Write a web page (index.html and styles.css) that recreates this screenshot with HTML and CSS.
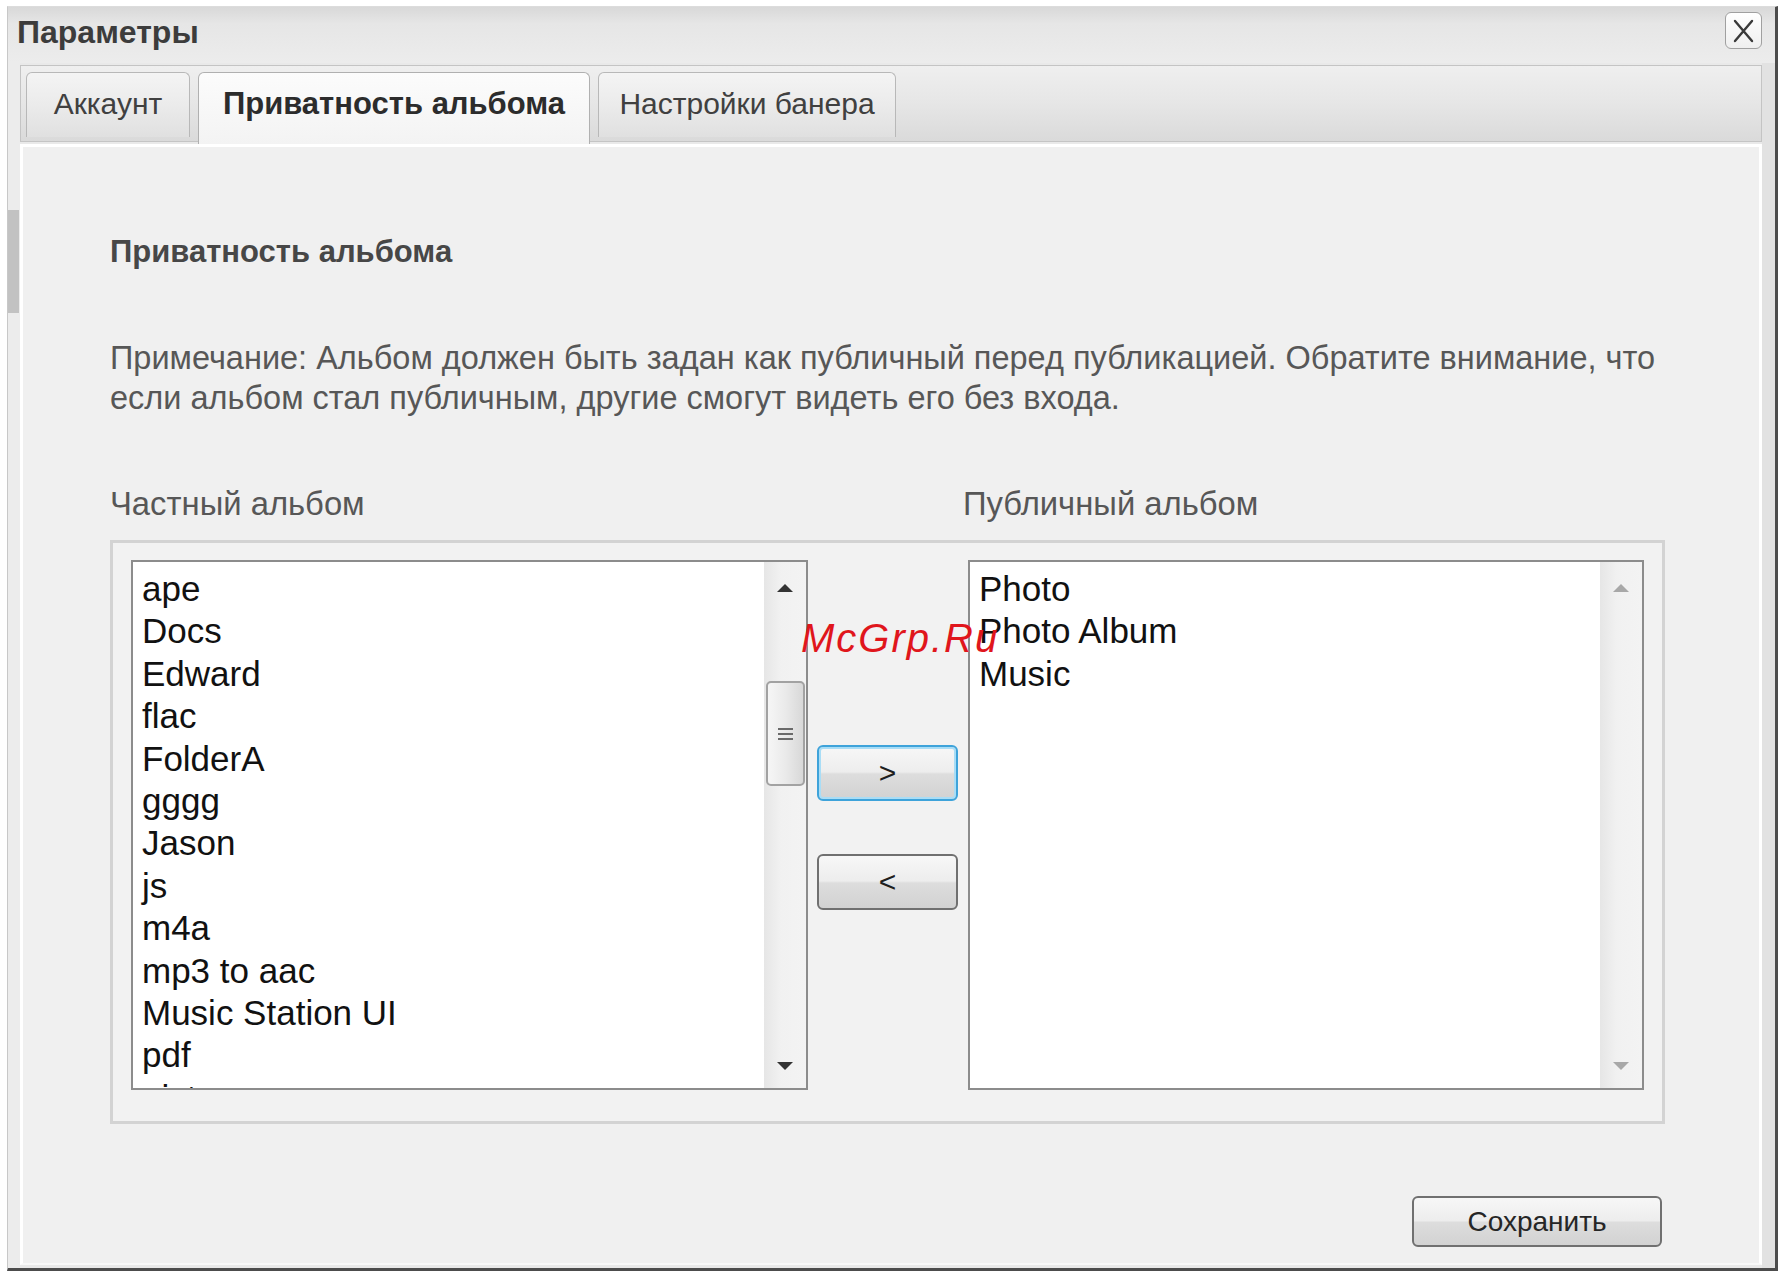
FILE: index.html
```html
<!DOCTYPE html>
<html lang="ru">
<head>
<meta charset="utf-8">
<title>Параметры</title>
<link rel="stylesheet" href="styles.css">
</head>
<body>
<div class="dialog">
  <div class="titlebar">
    <span class="title">Параметры</span>
    <div class="close">
      <svg width="35" height="36" viewBox="0 0 35 36"><path d="M9 8 L26 28 M26 8 L9 28" stroke="#3a3a3a" stroke-width="2.4" fill="none" stroke-linecap="round"/></svg>
    </div>
  </div>
  <div class="dlg-body">
    <div class="gutter"><div class="pagethumb"></div></div>
    <div class="main">
      <div class="tabstrip">
        <div class="tab t1">Аккаунт</div>
        <div class="tab t2 active">Приватность альбома</div>
        <div class="tab t3">Настройки банера</div>
      </div>
      <div class="panel">
        <h2 class="heading">Приватность альбома</h2>
        <p class="note">Примечание: Альбом должен быть задан как публичный перед публикацией. Обратите внимание, что<br>если альбом стал публичным, другие смогут видеть его без входа.</p>
        <div class="labels">
          <span class="lbl-left">Частный альбом</span>
          <span class="lbl-right">Публичный альбом</span>
        </div>
        <div class="group">
          <div class="listbox left">
            <div class="items">
              <div class="item">ape</div>
              <div class="item">Docs</div>
              <div class="item">Edward</div>
              <div class="item">flac</div>
              <div class="item">FolderA</div>
              <div class="item">gggg</div>
              <div class="item">Jason</div>
              <div class="item">js</div>
              <div class="item">m4a</div>
              <div class="item">mp3 to aac</div>
              <div class="item">Music Station UI</div>
              <div class="item">pdf</div>
              <div class="item">pict</div>
            </div>
            <div class="scrollbar">
              <div class="arrow up"></div>
              <div class="thumb"><span></span><span></span><span></span></div>
              <div class="spacer"></div>
              <div class="arrow down"></div>
            </div>
          </div>
          <div class="movers">
            <div class="btn mover focused">&gt;</div>
            <div class="btn mover">&lt;</div>
          </div>
          <div class="listbox right">
            <div class="items">
              <div class="item">Photo</div>
              <div class="item">Photo Album</div>
              <div class="item">Music</div>
            </div>
            <div class="scrollbar disabled">
              <div class="arrow up"></div>
              <div class="spacer"></div>
              <div class="arrow down"></div>
            </div>
          </div>
          <div class="watermark">McGrp.Ru</div>
        </div>
        <div class="actions">
          <div class="btn save">Сохранить</div>
        </div>
      </div>
    </div>
    <div class="rgutter"></div>
  </div>
</div>
</body>
</html>
```

FILE: styles.css
```css
html, body {
  margin: 0;
  padding: 0;
  background: #ffffff;
}
body {
  font-family: "Liberation Sans", Arial, sans-serif;
  width: 1786px;
  height: 1279px;
  overflow: hidden;
}
.dialog {
  box-sizing: border-box;
  margin: 6px 0 0 7px;
  width: 1771px;
  height: 1265px;
  border-left: 1px solid #c8c8c8;
  border-top: 1px solid #dcdcdc;
  border-right: 3px solid #4c4c4c;
  border-bottom: 3px solid #4c4c4c;
  background: #e9e9e9;
  display: flex;
  flex-direction: column;
}
.titlebar {
  height: 56px;
  flex: none;
  display: flex;
  align-items: flex-start;
  justify-content: space-between;
  padding-left: 9px;
  padding-right: 13px;
  background: linear-gradient(#d8d8d8 0%, #e6e6e6 30%, #ececec 100%);
}
.title {
  font-weight: bold;
  font-size: 32px;
  line-height: 36px;
  margin-top: 7px;
  color: #3c3c3c;
}
.close {
  margin-top: 5px;
  width: 37px;
  height: 37px;
  box-sizing: border-box;
  border: 1px solid #a0a0a0;
  border-radius: 6px;
  background: linear-gradient(#ffffff, #efefef);
  display: flex;
  align-items: center;
  justify-content: center;
}
.close svg {
  display: block;
}
.dlg-body {
  flex: 1;
  display: flex;
  min-height: 0;
}
.gutter {
  width: 12px;
  flex: none;
  background: #ececec;
}
.pagethumb {
  margin-top: 147px;
  width: 11px;
  height: 103px;
  background: #c2c2c2;
}
.main {
  width: 1742px;
  flex: none;
  display: flex;
  flex-direction: column;
  padding-top: 2px;
  padding-bottom: 3px;
  box-sizing: border-box;
}
.rgutter {
  width: 13px;
  flex: none;
  background: #e2e2e2;
}
.tabstrip {
  box-sizing: border-box;
  height: 77px;
  flex: none;
  border: 1px solid #c4c4c4;
  background: linear-gradient(#efefef 0%, #e6e6e6 50%, #dadada 100%);
  display: flex;
  align-items: flex-start;
  gap: 8px;
  padding: 6px 0 0 5px;
  position: relative;
  z-index: 1;
}
.tab {
  box-sizing: border-box;
  height: 65px;
  border: 1px solid #b8b8b8;
  border-bottom: none;
  border-radius: 6px 6px 0 0;
  background: linear-gradient(#f4f4f4 0%, #ebebeb 50%, #e0e0e0 100%);
  font-size: 30px;
  line-height: 62px;
  text-align: center;
  color: #404040;
  white-space: nowrap;
}
.t1 { width: 164px; }
.t2 { width: 392px; }
.t3 { width: 298px; }
.tab.active {
  height: 72px;
  background: linear-gradient(#fcfcfc 0%, #f3f3f3 100%);
  font-weight: bold;
  font-size: 31px;
  color: #2c2c2c;
  border-color: #b0b0b0;
}
.panel {
  flex: 1;
  margin-top: 2px;
  border: 3px solid #ffffff;
  border-bottom: 2px solid #f8f8f8;
  background: #f0f0f0;
  padding-left: 87px;
  box-sizing: border-box;
}
.heading {
  margin: 0;
  padding-top: 85px;
  font-size: 31px;
  line-height: 40px;
  font-weight: bold;
  color: #474747;
}
.note {
  margin: 66px 0 0 0;
  font-size: 32.5px;
  line-height: 40px;
  color: #575757;
  white-space: nowrap;
}
.labels {
  margin-top: 66px;
  display: flex;
  font-size: 32.8px;
  line-height: 40px;
  color: #575757;
}
.lbl-left {
  width: 853px;
}
.group {
  position: relative;
  margin-top: 16px;
  box-sizing: border-box;
  width: 1555px;
  height: 584px;
  border: 3px solid #d3d3d3;
  background: #f2f2f2;
  display: flex;
  align-items: flex-start;
  padding: 17px 18px 0 18px;
}
.listbox {
  box-sizing: border-box;
  height: 530px;
  border: 2px solid #8c8c8c;
  background: #ffffff;
  display: flex;
  overflow: hidden;
}
.listbox.left {
  width: 677px;
}
.listbox.right {
  width: 676px;
  margin-left: 10px;
}
.items {
  flex: 1;
  padding: 6px 0 0 9px;
  overflow: hidden;
}
.item {
  font-size: 35px;
  line-height: 42.4px;
  color: #111111;
  white-space: nowrap;
}
.scrollbar {
  width: 42px;
  flex: none;
  background: linear-gradient(90deg, #e6e6e6 0%, #f1f1f1 40%, #f3f3f3 100%);
  display: flex;
  flex-direction: column;
  align-items: center;
  padding: 22px 0 18px 0;
  box-sizing: border-box;
}
.arrow {
  width: 0;
  height: 0;
  border-left: 8px solid transparent;
  border-right: 8px solid transparent;
}
.arrow.up {
  border-bottom: 8px solid #333333;
}
.arrow.down {
  border-top: 8px solid #333333;
}
.scrollbar.disabled .arrow.up {
  border-bottom-color: #a8a8a8;
}
.scrollbar.disabled .arrow.down {
  border-top-color: #a8a8a8;
}
.spacer {
  flex: 1;
}
.thumb {
  margin-top: 89px;
  width: 39px;
  height: 105px;
  box-sizing: border-box;
  border: 2px solid #a2a2a2;
  border-radius: 5px;
  background: linear-gradient(90deg, #f6f6f6 0%, #eaeaea 50%, #d8d8d8 100%);
  display: flex;
  flex-direction: column;
  align-items: center;
  justify-content: center;
  gap: 3px;
}
.thumb span {
  display: block;
  width: 15px;
  height: 2px;
  background: #6a6a6a;
}
.movers {
  width: 141px;
  margin-left: 9px;
  padding-top: 185px;
  display: flex;
  flex-direction: column;
  gap: 53px;
}
.btn {
  box-sizing: border-box;
  border: 2px solid #707070;
  border-radius: 6px;
  background: linear-gradient(#f7f7f7 0%, #ededed 48%, #dddddd 52%, #d2d2d2 100%);
  display: flex;
  align-items: center;
  justify-content: center;
  color: #1e1e1e;
}
.mover {
  height: 56px;
  font-size: 30px;
}
.mover.focused {
  border: 2px solid #3ea3da;
  box-shadow: inset 0 0 0 2px #a9ddf6;
}
.watermark {
  position: absolute;
  left: 688px;
  top: 75px;
  color: #e0161c;
  font-style: italic;
  font-size: 40px;
  line-height: 40px;
  letter-spacing: 2px;
}
.actions {
  width: 1555px;
  margin-top: 72px;
  display: flex;
  justify-content: flex-end;
}
.save {
  width: 250px;
  height: 51px;
  margin-right: 3px;
  font-size: 28px;
  color: #262626;
}
```
